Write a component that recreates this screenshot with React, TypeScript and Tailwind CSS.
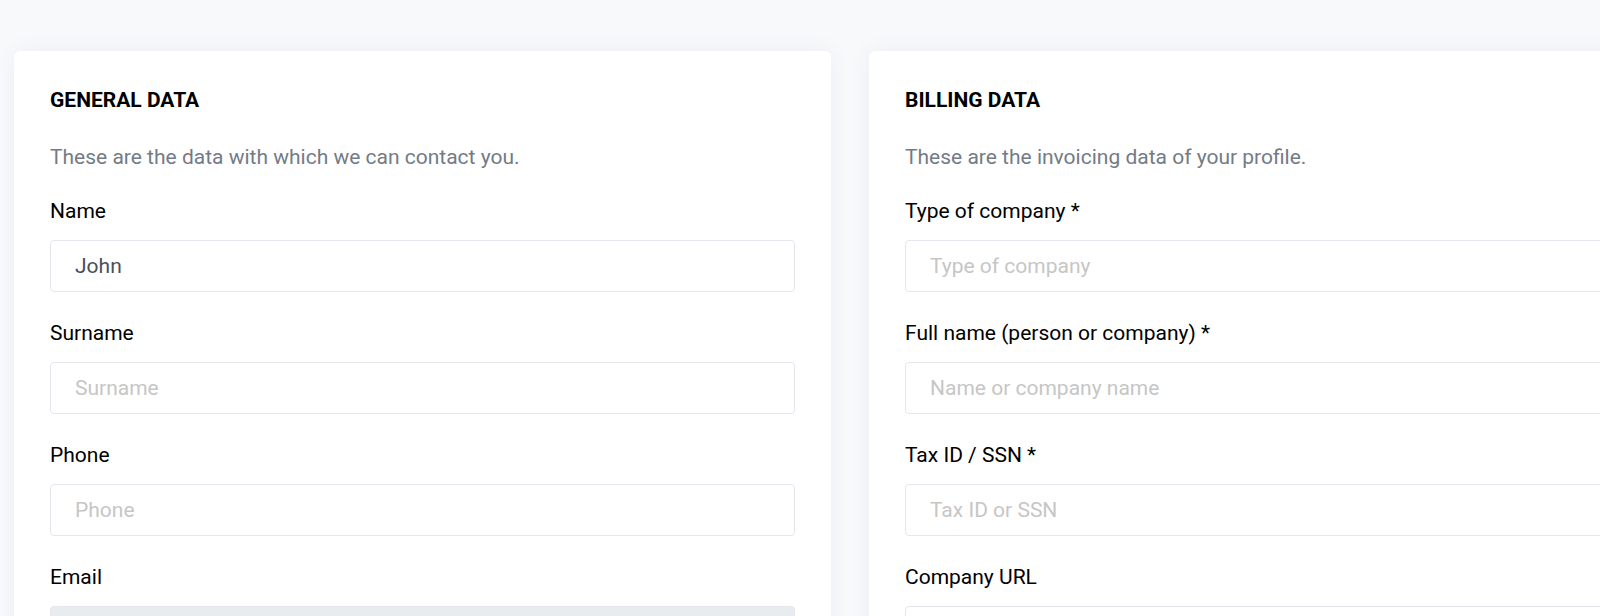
import React from "react";

type Field = { label: string; placeholder: string; value?: string; disabled?: boolean };

function Card({ title, desc, fields }: { title: string; desc: string; fields: Field[] }) {
  return (
    <div className="w-[817px] shrink-0 rounded-[6px] bg-white px-[36px] pt-[34px] pb-[40px] shadow-[0_0_24px_rgba(30,40,80,0.05)]">
      <h2 className="text-[21px] font-bold leading-[30px] text-black">{title}</h2>
      <p className="mt-[27px] text-[21px] leading-[30px] text-[#737b86]">{desc}</p>
      <div className="mt-[24px] flex flex-col gap-[26px]">
        {fields.map((f) => (
          <div key={f.label} className="flex flex-col">
            <label className="text-[21px] leading-[30px] text-black">{f.label}</label>
            <input
              className={`mt-[14px] h-[52px] w-full rounded-[4px] border border-[#e6e6ee] px-[24px] text-[21px] text-[#495057] outline-none placeholder:text-[#c6c6c6] ${
                f.disabled ? "bg-[#e9ecef]" : "bg-white"
              }`}
              placeholder={f.placeholder}
              defaultValue={f.value}
              readOnly
            />
          </div>
        ))}
      </div>
    </div>
  );
}

export default function App() {
  return (
    <div
      className="h-[616px] w-full overflow-hidden bg-[#f8f9fb]"
      style={{ fontFamily: "Roboto, 'Noto Sans', sans-serif" }}
    >
      <div className="flex gap-[38px] pl-[14px] pt-[51px]">
        <Card
          title="GENERAL DATA"
          desc="These are the data with which we can contact you."
          fields={[
            { label: "Name", placeholder: "Name", value: "John" },
            { label: "Surname", placeholder: "Surname" },
            { label: "Phone", placeholder: "Phone" },
            { label: "Email", placeholder: "", disabled: true },
          ]}
        />
        <Card
          title="BILLING DATA"
          desc="These are the invoicing data of your profile."
          fields={[
            { label: "Type of company *", placeholder: "Type of company" },
            { label: "Full name (person or company) *", placeholder: "Name or company name" },
            { label: "Tax ID / SSN *", placeholder: "Tax ID or SSN" },
            { label: "Company URL", placeholder: "Company URL" },
          ]}
        />
      </div>
    </div>
  );
}
